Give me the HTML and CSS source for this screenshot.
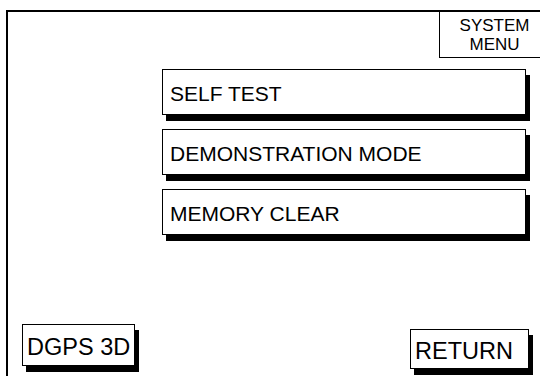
FILE: index.html
```html
<!DOCTYPE html>
<html lang="en">

<head>
    <meta charset="UTF-8">
    <meta name="viewport" content="width=device-width, initial-scale=1.0">
    <title>System Menu</title>
    <link rel="stylesheet" href="styles.css">
</head>

<body>
    <div class="frame">
        <div class="sys-menu">
            <span>SYSTEM</span>
            <span>MENU</span>
        </div>

        <div class="menu">
            <div class="btn">SELF TEST</div>
            <div class="btn">DEMONSTRATION MODE</div>
            <div class="btn">MEMORY CLEAR</div>
        </div>

        <div class="footer">
            <div class="btn small dgps">DGPS 3D</div>
            <div class="btn small ret">RETURN</div>
        </div>
    </div>
</body>

</html>
```

FILE: styles.css
```css
html,
body {
    margin: 0;
    height: 376px;
    overflow: hidden;
    background: #fff;
}

body {
    font-family: "Liberation Sans", Arial, sans-serif;
    color: #000;
}

.frame {
    box-sizing: border-box;
    width: 543px;
    height: 366px;
    margin: 10px 0 0 6px;
    border-top: 2px solid #000;
    border-left: 2px solid #000;
    display: flex;
    flex-direction: column;
}

.sys-menu {
    box-sizing: border-box;
    align-self: flex-end;
    width: 110px;
    height: 46px;
    border-left: 1px solid #000;
    border-bottom: 1px solid #000;
    display: flex;
    flex-direction: column;
    align-items: center;
    justify-content: center;
    font-size: 17px;
    line-height: 19px;
}

.menu {
    margin: 11px 0 0 154px;
    display: flex;
    flex-direction: column;
    gap: 14px;
}

.btn {
    box-sizing: border-box;
    width: 364px;
    height: 46px;
    padding: 4px 0 0 7px;
    border: 1px solid #000;
    background: #fff;
    box-shadow: 4px 6px 0 #000;
    display: flex;
    align-items: center;
    font-size: 21px;
}

.footer {
    margin-top: auto;
    padding: 0 20px 0 14px;
    display: flex;
    justify-content: space-between;
    align-items: flex-end;
}

.btn.small {
    font-size: 23.5px;
    padding: 4px 0 0 4px;
}

.dgps {
    width: 113px;
    height: 42px;
    margin-bottom: 10px;
}

.ret {
    width: 119px;
    height: 40px;
    margin-bottom: 7px;
}
```
